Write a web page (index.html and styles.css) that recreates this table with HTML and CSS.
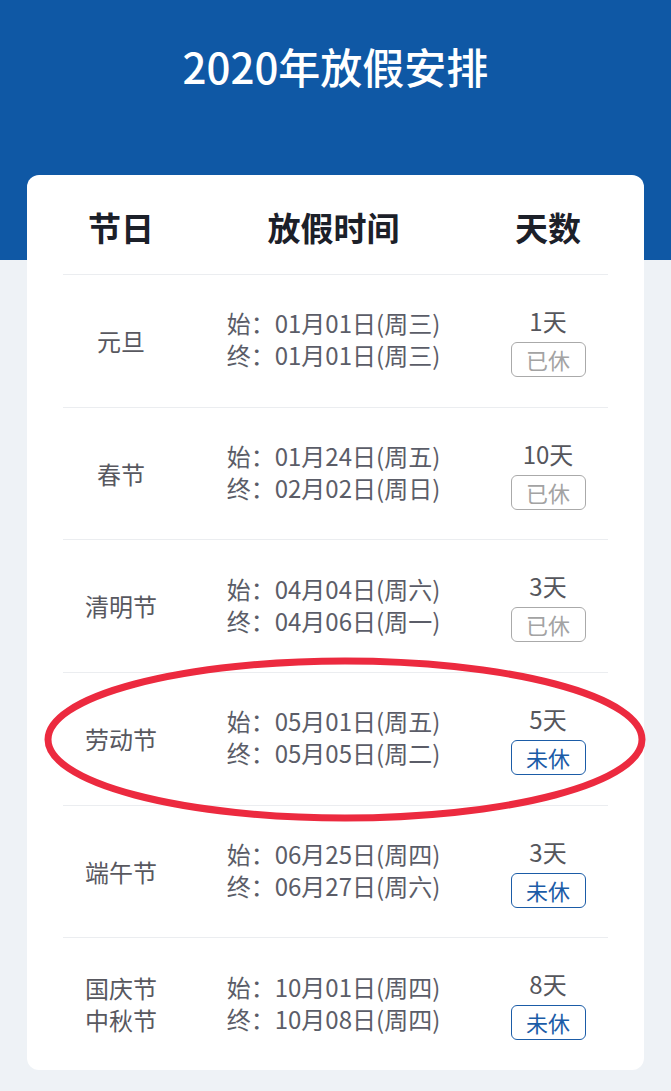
FILE: index.html
```html
<!DOCTYPE html>
<html lang="zh-CN">
<head>
<meta charset="utf-8">
<title>2020年放假安排</title>
<link rel="stylesheet" href="styles.css">
</head>
<body>
<div class="page">
  <header class="hero">
    <h1 class="title">2020年放假安排</h1>
  </header>
  <section class="card">
    <div class="row head">
      <div class="h-cell">节日</div>
      <div class="h-cell">放假时间</div>
      <div class="h-cell">天数</div>
    </div>
    <div class="row">
      <div class="c-name">元旦</div>
      <div class="c-date"><div class="dates"><div>始：01月01日(周三)</div><div>终：01月01日(周三)</div></div></div>
      <div class="c-days"><div class="num">1天</div><span class="badge done">已休</span></div>
    </div>
    <div class="row">
      <div class="c-name">春节</div>
      <div class="c-date"><div class="dates"><div>始：01月24日(周五)</div><div>终：02月02日(周日)</div></div></div>
      <div class="c-days"><div class="num">10天</div><span class="badge done">已休</span></div>
    </div>
    <div class="row">
      <div class="c-name">清明节</div>
      <div class="c-date"><div class="dates"><div>始：04月04日(周六)</div><div>终：04月06日(周一)</div></div></div>
      <div class="c-days"><div class="num">3天</div><span class="badge done">已休</span></div>
    </div>
    <div class="row">
      <div class="c-name">劳动节</div>
      <div class="c-date"><div class="dates"><div>始：05月01日(周五)</div><div>终：05月05日(周二)</div></div></div>
      <div class="c-days"><div class="num">5天</div><span class="badge todo">未休</span></div>
    </div>
    <div class="row">
      <div class="c-name">端午节</div>
      <div class="c-date"><div class="dates"><div>始：06月25日(周四)</div><div>终：06月27日(周六)</div></div></div>
      <div class="c-days"><div class="num">3天</div><span class="badge todo">未休</span></div>
    </div>
    <div class="row">
      <div class="c-name">国庆节<br>中秋节</div>
      <div class="c-date"><div class="dates"><div>始：10月01日(周四)</div><div>终：10月08日(周四)</div></div></div>
      <div class="c-days"><div class="num">8天</div><span class="badge todo">未休</span></div>
    </div>
  </section>
  <svg class="mark" width="671" height="1091" viewBox="0 0 671 1091" aria-hidden="true">
    <ellipse cx="345" cy="739.5" rx="297" ry="78.5" fill="none" stroke="#ec2a3f" stroke-width="7"/>
  </svg>
</div>
</body>
</html>
```
FILE: styles.css
```css
* { box-sizing: border-box; }
html, body { margin: 0; padding: 0; }
body {
  background: #eef2f6;
  font-family: "Noto Sans CJK SC", "Noto Sans", sans-serif;
}
.page {
  position: relative;
  width: 671px;
  height: 1091px;
  overflow: hidden;
}
.hero {
  height: 260px;
  background: #0f58a5;
  padding-top: 40px;
}
.title {
  margin: 0;
  text-align: center;
  color: #ffffff;
  font-size: 42px;
  line-height: 52px;
  font-weight: 500;
}
.card {
  margin: -85px 27px 0;
  background: #ffffff;
  border-radius: 12px;
  padding: 0 36px;
}
.row {
  display: grid;
  grid-template-columns: 116px 1fr 120px;
  align-items: center;
  height: 132.7px;
  border-top: 1px solid #ebedf0;
}
.row.head {
  height: 99px;
  border-top: none;
}
.h-cell {
  text-align: center;
  font-size: 33px;
  line-height: 40px;
  font-weight: 700;
  color: #1c2029;
  padding-top: 4px;
}
.c-name {
  text-align: center;
  font-size: 24px;
  line-height: 32px;
  color: #58585f;
}
.c-date {
  display: flex;
  justify-content: center;
}
.dates {
  font-size: 24px;
  line-height: 32px;
  color: #5b5d68;
  padding-bottom: 3px;
}
.c-days {
  display: flex;
  flex-direction: column;
  align-items: center;
  padding-top: 2px;
}
.num {
  font-size: 24px;
  line-height: 28px;
  color: #55565c;
}
.badge {
  margin-top: 7px;
  width: 75px;
  height: 35px;
  border-radius: 6px;
  border: 1.5px solid;
  font-size: 22px;
  line-height: 32px;
  text-align: center;
}
.badge.done { border-color: #aaaaaa; color: #a3a3a3; }
.badge.todo { border-color: #1b5ca7; color: #1b5ca7; }
.mark {
  position: absolute;
  left: 0;
  top: 0;
  pointer-events: none;
}
```
